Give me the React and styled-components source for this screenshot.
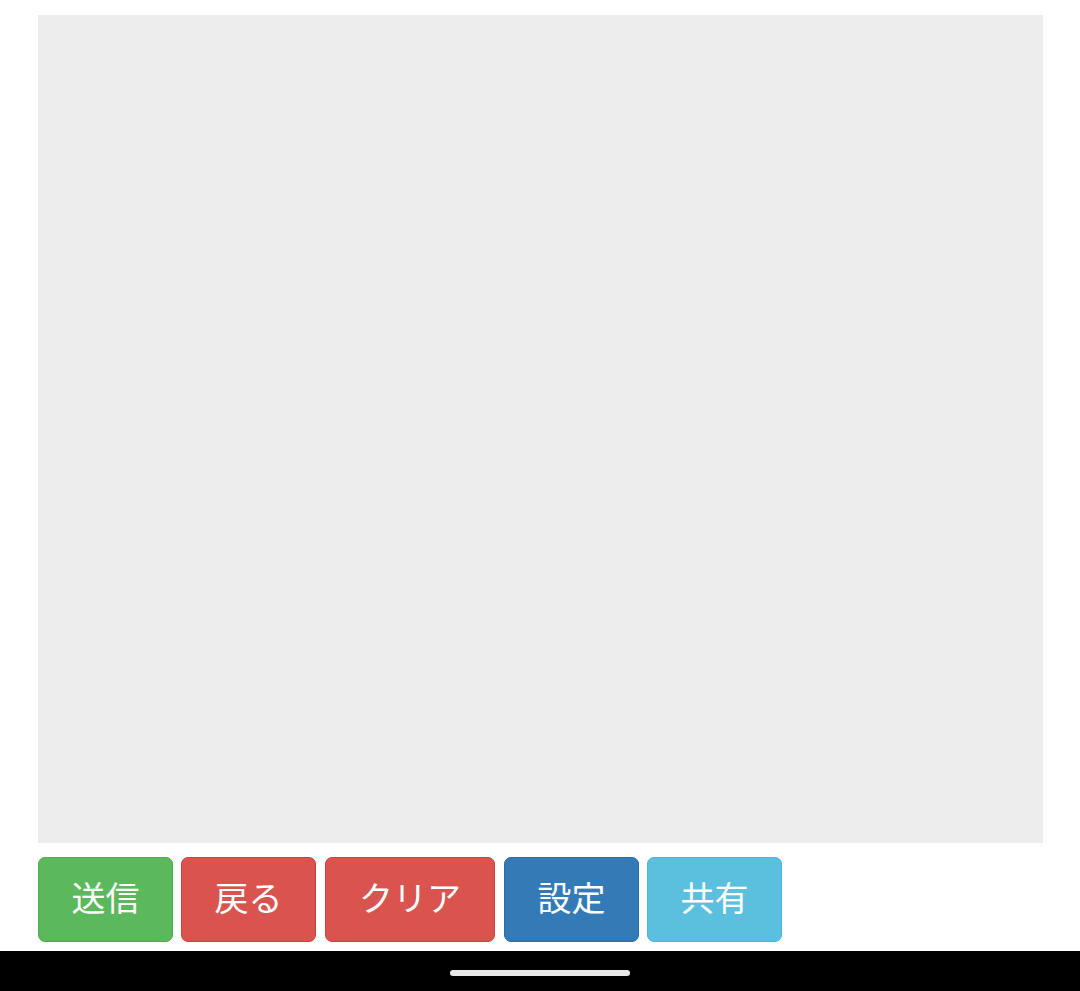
import React from "react"
import styled, { createGlobalStyle } from "styled-components"

const GlobalStyle = createGlobalStyle`
  html, body {
    margin: 0;
    padding: 0;
    background: #ffffff;
  }
  body {
    font-family: "Noto Sans CJK JP", "Noto Sans", sans-serif;
  }
`

const variants = {
  success: { bg: "#5cb85c", border: "#4cae4c" },
  danger: { bg: "#d9534f", border: "#d43f3a" },
  primary: { bg: "#337ab7", border: "#2e6da4" },
  info: { bg: "#5bc0de", border: "#46b8da" },
}

const Page = styled.div`
  height: 991px;
  display: flex;
  flex-direction: column;
`

const Main = styled.div`
  flex: 1;
  padding: 15px 37px 0 38px;
  display: flex;
  flex-direction: column;
  gap: 14px;
`

const Canvas = styled.div`
  height: 828px;
  background: #ededed;
`

const Toolbar = styled.div`
  display: flex;
  gap: 8px;
`

const Button = styled.button`
  height: 85px;
  padding: 0 0 6px;
  width: ${p => (p.$wide ? "170px" : "135px")};
  margin-right: ${p => (p.$spaced ? "1px" : "0")};
  border: 1px solid ${p => variants[p.$variant].border};
  border-radius: 7px;
  background: ${p => variants[p.$variant].bg};
  color: #ffffff;
  font-family: "Noto Sans CJK JP", "Noto Sans", sans-serif;
  font-size: 34px;
  line-height: 1;
  cursor: pointer;
`

const NavBar = styled.div`
  height: 40px;
  background: #000000;
  display: flex;
  align-items: center;
  justify-content: center;
`

const HomeIndicator = styled.div`
  width: 180px;
  height: 6px;
  margin-top: 4px;
  border-radius: 3px;
  background: #e8e8e8;
`

const buttons = [
  { label: "送信", variant: "success" },
  { label: "戻る", variant: "danger", spaced: true },
  { label: "クリア", variant: "danger", wide: true, spaced: true },
  { label: "設定", variant: "primary" },
  { label: "共有", variant: "info" },
]

export default function App() {
  return (
    <Page>
      <GlobalStyle />
      <Main>
        <Canvas />
        <Toolbar>
          {buttons.map(b => (
            <Button
              key={b.label}
              $variant={b.variant}
              $wide={b.wide}
              $spaced={b.spaced}
            >
              {b.label}
            </Button>
          ))}
        </Toolbar>
      </Main>
      <NavBar>
        <HomeIndicator />
      </NavBar>
    </Page>
  )
}
